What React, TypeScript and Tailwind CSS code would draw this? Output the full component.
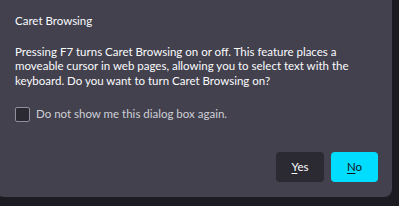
import React from "react";

export default function App() {
  return (
    <div className="w-[399px] h-[206px] bg-[#1c1b22] overflow-hidden font-[Lato,'Noto_Sans',sans-serif]">
      <div className="ml-[-4px] w-[396px] h-[197px] bg-[#42414d] rounded-b-[8px] pl-[19px] pr-[14px] flex flex-col">
        <div className="pt-[13px] text-[11.5px] leading-[15px] text-[#fbfbfe]">Caret Browsing</div>
        <div className="mt-[16.5px] text-[11.5px] leading-[14.5px] text-[#fbfbfe] whitespace-nowrap">
          Pressing F7 turns Caret Browsing on or off. This feature places a<br />
          moveable cursor in web pages, allowing you to select text with the<br />
          keyboard. Do you want to turn Caret Browsing on?
        </div>
        <label className="mt-[17.5px] flex items-start gap-[6px]">
          <span className="mt-[1px] w-[15px] h-[15px] rounded-[2px] border border-[#8f8f9d] bg-[#2b2a33]" />
          <span className="text-[11.5px] leading-[15px] text-[#cfcfd8]">Do not show me this dialog box again.</span>
        </label>
        <div className="mt-auto mb-[15px] flex justify-end gap-[7px]">
          <button className="w-[48px] h-[30px] rounded-[4px] bg-[#2b2a33] text-[#fbfbfe] text-[11.5px]">
            <span className="underline underline-offset-2">Y</span>es
          </button>
          <button className="w-[47px] h-[30px] rounded-[4px] bg-[#00ddff] text-[#15141a] text-[11.5px]">
            <span className="underline underline-offset-2">N</span>o
          </button>
        </div>
      </div>
    </div>
  );
}
